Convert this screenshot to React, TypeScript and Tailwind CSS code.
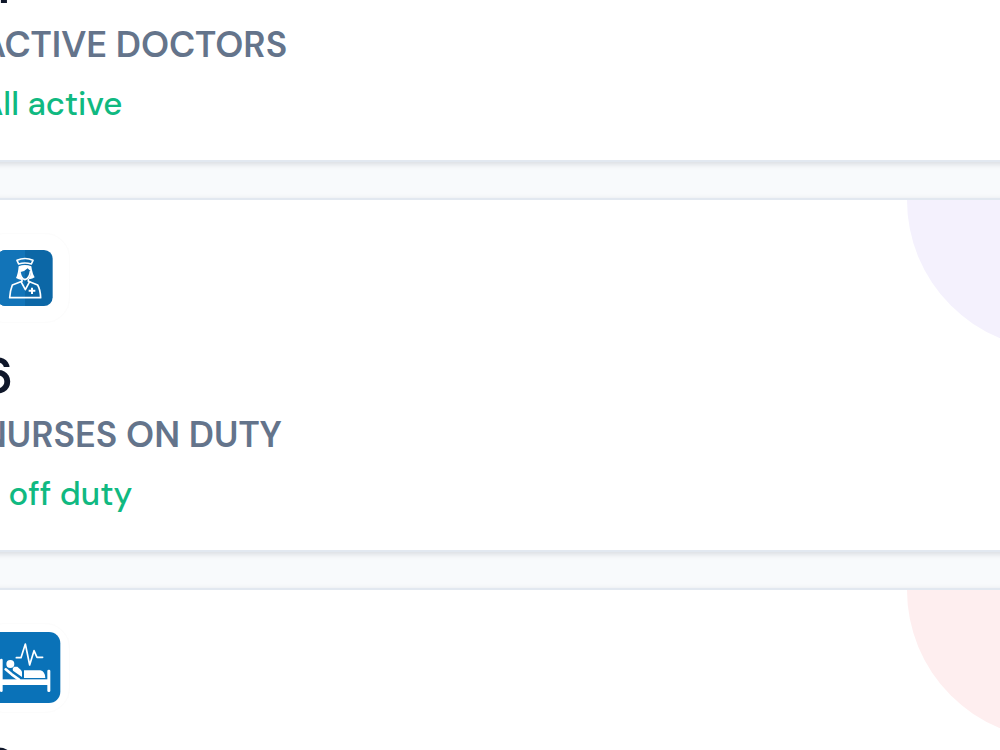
import type { ReactNode } from "react";

type Stat = {
  value: string;
  label: string;
  note?: string;
  blob?: string;
  icon?: ReactNode;
};

function NurseIcon() {
  return (
    <svg viewBox="-57 27 264 264" className="size-full" aria-hidden="true">
      <rect x="-9" y="75" width="167" height="168" rx="26" fill="#0c67a6" />
      <path d="M75 75H17a26 26 0 0 0-26 26v116a26 26 0 0 0 26 26h58z" fill="#1274b8" />
      <g fill="none" stroke="#fff" strokeWidth="5" strokeLinejoin="round" strokeLinecap="round">
        <path d="M56 117l-5-11q24-11 48 0l-5 11q-19-6-38 0z" />
        <path d="M66 164v5l-29 11q-7 18-8 38h93q-1-24-9-38l-28-11v-5" />
        <path d="M63 170l13 24 13-24" />
        <path d="M60 142q3 19 15 22 14-4 16-24" />
      </g>
      <path
        d="M56 124q19-8 38 0 1 6 2 11 2 12 8 22-6 4-16 6l-3-3q9-9 7-22-5-3-9-8-9 10-24 12 1 14 8 20l-2 3q-9-1-17-6 6-12 8-35z"
        fill="#fff"
      />
      <path d="M93 188h6v6h7v6h-7v7h-6v-7h-7v-6h7z" fill="#fff" />
    </svg>
  );
}

function BedIcon() {
  return (
    <svg viewBox="-57 42 264 264" className="size-full" aria-hidden="true">
      <rect x="-33" y="66" width="214" height="213" rx="34" fill="#0a72b8" />
      <path
        d="M49 143h14l13-41 13 63 13-43 9 20h17"
        fill="none"
        stroke="#fff"
        strokeWidth="5"
        strokeLinejoin="round"
        strokeLinecap="round"
      />
      <g fill="#fff">
        <rect x="0" y="146" width="8" height="100" rx="4" />
        <rect x="142" y="179" width="9" height="67" rx="4" />
        <rect x="4" y="208" width="142" height="17" />
        <circle cx="31" cy="162" r="12" />
        <path d="M72 181h49q14 3 15 23H72z" />
        <path d="M43 170h9l10 9q4 3 4 8v14L39 182q-3-8 4-12z" />
      </g>
      <path d="M17 178l18 15 22 16" fill="none" stroke="#fff" strokeWidth="8" strokeLinecap="round" strokeLinejoin="round" />
    </svg>
  );
}

const stats: Stat[] = [
  { value: "4", label: "ACTIVE DOCTORS", note: "All active" },
  { value: "6", label: "NURSES ON DUTY", note: "2 off duty", blob: "bg-[#f4f1fd]", icon: <NurseIcon /> },
  { value: "0", label: "PATIENTS", blob: "bg-[#feeeef]", icon: <BedIcon /> },
];

function StatCard({ value, label, note, blob, icon }: Stat) {
  return (
    <section className="relative overflow-hidden border-y-2 border-[#e2e8f0] bg-white px-11 pt-[34px] pb-8 shadow-[0_2px_6px_rgba(15,23,42,0.14)]">
      {blob && <div className={`absolute -top-[149px] -right-[189px] size-[298px] rounded-full ${blob}`} />}
      {icon && <div className="mb-7 size-[88px] rounded-3xl outline outline-[#fcfcfc]">{icon}</div>}
      <p className="text-[51px] leading-[52px] font-semibold text-[#0f172a]">{value}</p>
      <h2 className="mt-2 text-[36px] leading-[50px] font-semibold text-[#64748b]">{label}</h2>
      {note && <p className="mt-[10px] text-[33px] leading-12 font-medium text-[#10b981]">{note}</p>}
    </section>
  );
}

export default function App() {
  return (
    <main className="h-screen overflow-hidden bg-[#f8fafc] font-['DM_Sans','Inter',sans-serif]">
      <div className="-mt-[76px] -mr-4 -ml-[63px] flex flex-col gap-9">
        {stats.map((stat) => (
          <StatCard key={stat.label} {...stat} />
        ))}
      </div>
    </main>
  );
}
